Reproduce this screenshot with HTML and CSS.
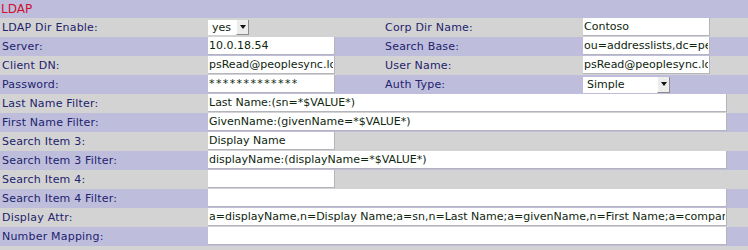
FILE: index.html
```html
<!DOCTYPE html>
<html lang="en">
<head>
    <meta charset="UTF-8">
    <meta name="viewport" content="width=device-width, initial-scale=1.0">
    <title>LDAP Settings</title>
    <link rel="stylesheet" href="styles.css">
</head>
<body>
    <div class="ldap">
        <div class="title">LDAP</div>

        <div class="row gray">
            <label class="lbl">LDAP Dir Enable:</label>
            <div class="cell">
                <span class="select select-yes"><select><option>yes</option><option>no</option></select><span class="arrow"></span></span>
            </div>
            <label class="lbl lbl-right">Corp Dir Name:</label>
            <div class="cell"><input class="txt" type="text" value="Contoso"></div>
        </div>

        <div class="row lav">
            <label class="lbl">Server:</label>
            <div class="cell"><input class="txt" type="text" value="10.0.18.54"></div>
            <label class="lbl lbl-right">Search Base:</label>
            <div class="cell"><input class="txt" type="text" value="ou=addresslists,dc=peoplesync,dc=local"></div>
        </div>

        <div class="row gray">
            <label class="lbl">Client DN:</label>
            <div class="cell"><input class="txt" type="text" value="psRead@peoplesync.local"></div>
            <label class="lbl lbl-right">User Name:</label>
            <div class="cell"><input class="txt" type="text" value="psRead@peoplesync.local"></div>
        </div>

        <div class="row lav">
            <label class="lbl">Password:</label>
            <div class="cell"><input class="txt txt-pass" type="text" value="*************"></div>
            <label class="lbl lbl-right">Auth Type:</label>
            <div class="cell">
                <span class="select select-auth"><select><option>Simple</option><option>Digest</option></select><span class="arrow"></span></span>
            </div>
        </div>

        <div class="row gray">
            <label class="lbl">Last Name Filter:</label>
            <div class="cell wide"><input class="txt txt-wide" type="text" value="Last Name:(sn=*$VALUE*)"></div>
        </div>

        <div class="row lav">
            <label class="lbl">First Name Filter:</label>
            <div class="cell wide"><input class="txt txt-wide" type="text" value="GivenName:(givenName=*$VALUE*)"></div>
        </div>

        <div class="row gray">
            <label class="lbl">Search Item 3:</label>
            <div class="cell"><input class="txt" type="text" value="Display Name"></div>
        </div>

        <div class="row lav">
            <label class="lbl">Search Item 3 Filter:</label>
            <div class="cell wide"><input class="txt txt-wide" type="text" value="displayName:(displayName=*$VALUE*)"></div>
        </div>

        <div class="row gray">
            <label class="lbl">Search Item 4:</label>
            <div class="cell"><input class="txt" type="text" value=""></div>
        </div>

        <div class="row lav">
            <label class="lbl">Search Item 4 Filter:</label>
            <div class="cell wide"><input class="txt txt-wide" type="text" value=""></div>
        </div>

        <div class="row gray">
            <label class="lbl">Display Attr:</label>
            <div class="cell wide"><input class="txt txt-wide" type="text" value="a=displayName,n=Display Name;a=sn,n=Last Name;a=givenName,n=First Name;a=company,n=Company"></div>
        </div>

        <div class="row lav">
            <label class="lbl">Number Mapping:</label>
            <div class="cell wide"><input class="txt txt-wide" type="text" value=""></div>
        </div>

        <div class="row gray"></div>
    </div>
</body>
</html>
```

FILE: styles.css
```css
* {
    margin: 0;
    padding: 0;
    box-sizing: border-box;
}

body {
    background-color: #d3d3d3;
    font-family: "DejaVu Sans", Verdana, sans-serif;
    font-size: 11px;
}

.ldap {
    width: 748px;
}

.title {
    height: 18px;
    line-height: 18px;
    padding-left: 1px;
    background-color: #bebedc;
    color: #cc1133;
    font-size: 12px;
}

.row {
    display: grid;
    grid-template-columns: 206px 177px 198px 167px;
    height: 19px;
    align-items: center;
}

.gray {
    background-color: #d3d3d3;
}

.lav {
    background-color: #bebedc;
}

.lbl {
    padding-left: 2px;
    color: #22226e;
    letter-spacing: 0.2px;
    white-space: nowrap;
}

.lbl-right {
    padding-left: 2px;
}

.cell {
    padding-left: 2px;
    display: flex;
    align-items: center;
    height: 19px;
}

.wide {
    grid-column: 2 / 5;
}

.txt {
    display: block;
    width: 127px;
    height: 18px;
    margin-bottom: 1px;
    padding: 0 1px;
    border: none;
    border-right: 1px solid #b4b4bc;
    border-bottom: 1px solid #b4b4bc;
    background-color: #fff;
    color: #0e260e;
    font-family: "DejaVu Sans", Verdana, sans-serif;
    font-size: 11px;
    outline: none;
}

.txt-wide {
    width: 519px;
}

.txt-pass {
    letter-spacing: 1.4px;
}

.select {
    display: flex;
    background-color: #fff;
}

.select select {
    appearance: none;
    -webkit-appearance: none;
    flex: 1;
    border: none;
    background: transparent;
    padding-left: 4px;
    color: #0e260e;
    font-family: "DejaVu Sans", Verdana, sans-serif;
    font-size: 11px;
    outline: none;
}

.select-yes {
    width: 41px;
    height: 15px;
}

.select-auth {
    width: 87px;
    height: 16px;
}

.arrow {
    width: 13px;
    position: relative;
    background-color: #ececec;
    border-right: 1px solid #8c8c8c;
    border-bottom: 1px solid #8c8c8c;
    border-left: 1px solid #fff;
}

.arrow::after {
    content: "";
    position: absolute;
    left: 3px;
    top: 50%;
    margin-top: -2px;
    border-left: 3px solid transparent;
    border-right: 3px solid transparent;
    border-top: 4px solid #111;
}
```
